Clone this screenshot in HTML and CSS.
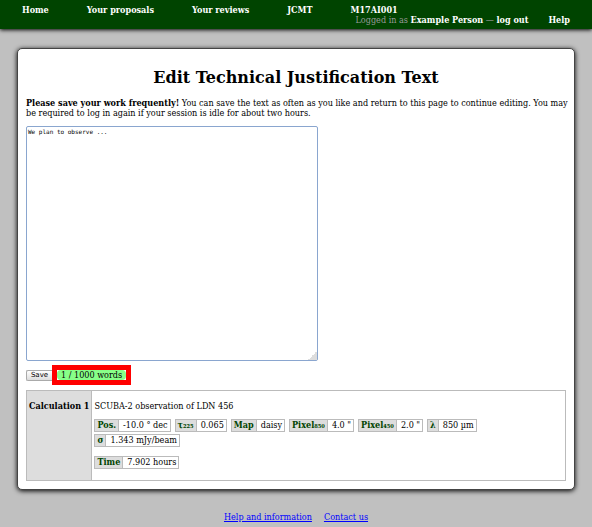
FILE: index.html
```html
<!DOCTYPE html>
<html lang="en">
<head>
<meta charset="utf-8">
<title>Edit Technical Justification Text</title>
<link rel="stylesheet" href="styles.css">
</head>
<body>
<header class="topbar">
  <nav class="nav">
    <a href="#">Home</a>
    <a href="#">Your proposals</a>
    <a href="#">Your reviews</a>
    <a href="#">JCMT</a>
    <a href="#">M17AI001</a>
  </nav>
  <div class="session">
    <span>Logged in as <a href="#">Example Person</a> — <a href="#">log out</a></span>
    <a href="#">Help</a>
  </div>
</header>
<main class="panel">
  <h1>Edit Technical Justification Text</h1>
  <p class="notice"><strong>Please save your work frequently!</strong> You can save the text as often as you like and return to this page to continue editing. You may be required to log in again if your session is idle for about two hours.</p>
  <form class="editor">
    <textarea class="text" aria-label="Justification text">We plan to observe ...</textarea>
    <div class="actions">
      <button type="button" class="save">Save</button>
      <div class="highlight"><span class="count">1 / 1000 words</span></div>
    </div>
  </form>
  <table class="calculations">
    <tr>
      <th scope="row">Calculation 1</th>
      <td>
        <p class="title">SCUBA-2 observation of LDN 456</p>
        <dl class="values">
          <div><dt>Pos.</dt><dd>-10.0 ° dec</dd></div>
          <div><dt>τ₂₂₅</dt><dd>0.065</dd></div>
          <div><dt>Map</dt><dd>daisy</dd></div>
          <div><dt>Pixel₈₅₀</dt><dd>4.0 "</dd></div>
          <div><dt>Pixel₄₅₀</dt><dd>2.0 "</dd></div>
          <div><dt>λ</dt><dd>850 µm</dd></div>
          <div><dt>σ</dt><dd>1.343 mJy/beam</dd></div>
        </dl>
        <dl class="values">
          <div><dt>Time</dt><dd>7.902 hours</dd></div>
        </dl>
      </td>
    </tr>
  </table>
</main>
<footer class="footer">
  <a href="#">Help and information</a>
  <a href="#">Contact us</a>
</footer>
</body>
</html>
```
FILE: styles.css
```css
* {
  box-sizing: border-box;
}

body {
  margin: 0;
  background: #c0c0c0;
  color: #000;
  font: 9px/10px "DejaVu Serif Condensed", "DejaVu Serif", serif;
}

.topbar {
  padding: 5px 22px 4px;
  background: #040;
  color: #999;
  box-shadow: 0 1px 4px #000;
}

.topbar a {
  color: #fff;
  font-weight: bold;
  text-decoration: none;
}

.nav {
  display: flex;
  gap: 38px;
}

.session {
  display: flex;
  justify-content: flex-end;
  gap: 20px;
}

.panel {
  margin: 19px 17px 0;
  padding: 20px 8px 8px;
  border: 1px solid #444;
  border-radius: 5px;
  background: #fff;
  box-shadow: 0 1px 5px #000;
}

h1 {
  margin: 0 0 11px;
  font-family: "DejaVu Serif", serif;
  font-size: 16px;
  line-height: 18px;
  text-align: center;
}

.notice {
  margin: 0 -6px 8px 0;
}

.text {
  display: block;
  width: 292px;
  height: 235px;
  padding: 1px;
  border: 1px solid #8aa6cf;
  border-radius: 2px;
  color: #000;
  font: 6px/8px "DejaVu Sans Mono", monospace;
  outline: none;
}

.text::-webkit-resizer {
  background: linear-gradient(135deg, #fff 70%, #ddd 70%);
}

.actions {
  display: flex;
  align-items: center;
  margin: 4px 0 5px;
}

.save {
  width: 26px;
  height: 11px;
  padding: 0;
  border: 1px solid #aaa;
  border-right: 0;
  border-radius: 2px 0 0 2px;
  background: linear-gradient(#fff, #ddd);
  color: #000;
  font: 7px/8px "DejaVu Sans", sans-serif;
}

.highlight {
  display: flex;
  border: 5px solid #f00;
  background: #fff;
}

.count {
  padding: 0 4px;
  border-radius: 4px;
  background: #8f8;
}

.calculations {
  width: 100%;
  border-collapse: collapse;
}

.calculations th,
.calculations td {
  border: 1px solid #bbb;
  vertical-align: top;
  text-align: left;
}

.calculations th {
  width: 65px;
  padding: 10px 2px;
  background: #ddd;
  white-space: nowrap;
}

.calculations td {
  padding: 10px 2px 11px;
}

.title {
  margin: 0 0 8px;
}

.values {
  display: flex;
  flex-wrap: wrap;
  gap: 2px 4px;
  margin: 0 0 9px;
}

.values:last-child {
  margin: 0;
}

.values div {
  display: flex;
  border: 1px solid #bbb;
  line-height: 11px;
}

.values dt {
  padding: 0 2px;
  background: #ddd;
  border-right: 1px solid #bbb;
  color: #040;
  font-weight: bold;
}

.values dd {
  margin: 0;
  padding: 0 2px 0 4px;
}

.footer {
  display: flex;
  justify-content: center;
  gap: 12px;
  padding: 22px 0 4px;
}

.footer a {
  color: #00f;
}
```
